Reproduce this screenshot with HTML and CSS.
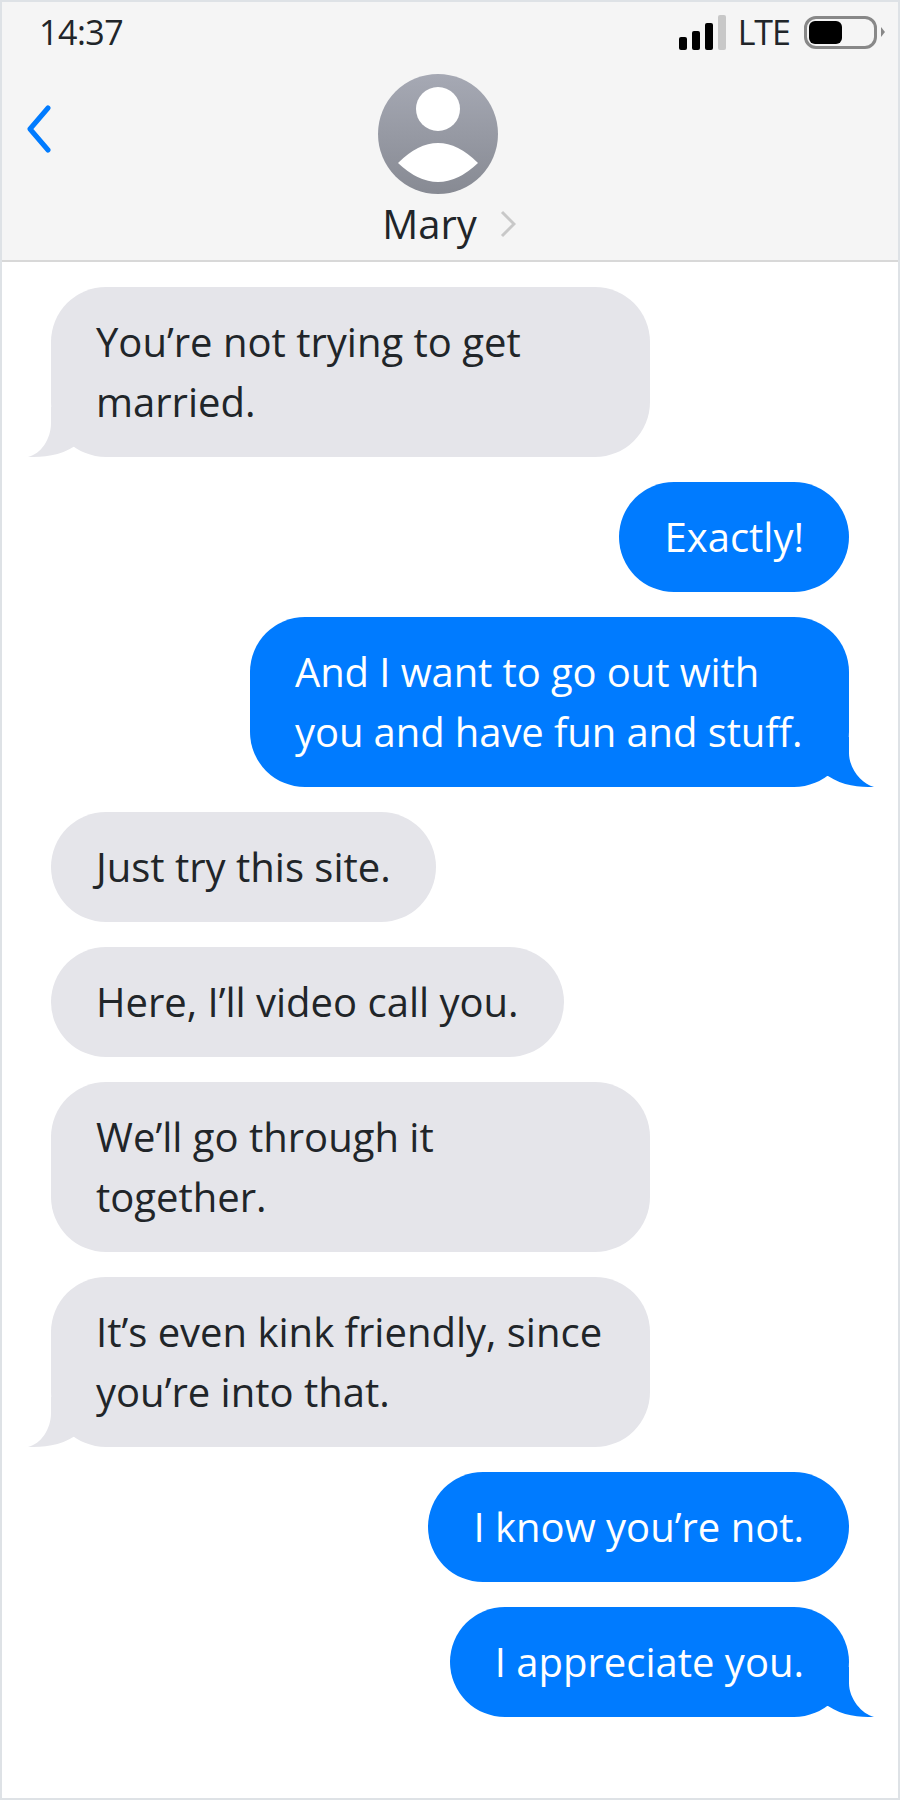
FILE: index.html
```html
<!DOCTYPE html>
<html lang="en">
<head>
  <meta charset="UTF-8">
  <title>Messages</title>
  <link rel="stylesheet" href="styles.css">
</head>
<body>
  <div class="phone">
    <header class="header">
      <div class="status">
        <span class="time">14:37</span>
        <div class="status-right">
          <div class="signal">
            <span class="bar bar1"></span>
            <span class="bar bar2"></span>
            <span class="bar bar3"></span>
            <span class="bar bar4"></span>
          </div>
          <span class="lte">LTE</span>
          <div class="battery"><span class="battery-level"></span></div>
          <span class="battery-tip"></span>
        </div>
      </div>
      <div class="contact">
        <svg class="back" width="28" height="50" viewBox="0 0 28 50">
          <path d="M23 3 L5 24 L23 45" fill="none" stroke="#007bff" stroke-width="5" stroke-linecap="round" stroke-linejoin="round"/>
        </svg>
        <svg class="avatar" width="120" height="120" viewBox="0 0 120 120">
          <defs>
            <linearGradient id="avatarFill" x1="0" y1="0" x2="0" y2="1">
              <stop offset="0" stop-color="#a6a9b4"/>
              <stop offset="1" stop-color="#878a93"/>
            </linearGradient>
          </defs>
          <circle cx="60" cy="60" r="60" fill="url(#avatarFill)"/>
          <circle cx="60" cy="35" r="22" fill="#fff"/>
          <path d="M20 89 Q60 49 100 89 Q60 127 20 89 Z" fill="#fff"/>
        </svg>
        <div class="name-row">
          <span class="name">Mary</span>
          <svg class="chevron" width="16" height="28" viewBox="0 0 16 28">
            <path d="M2 2 L14 14 L2 26" fill="none" stroke="#c8c8c8" stroke-width="3"/>
          </svg>
        </div>
      </div>
    </header>

    <main class="thread">
      <div class="msg in tail">You’re not trying to get married.</div>
      <div class="msg out">Exactly!</div>
      <div class="msg out tail tight">And I want to go out with you and have fun and stuff.</div>
      <div class="msg in">Just try this site.</div>
      <div class="msg in">Here, I’ll video call you.</div>
      <div class="msg in">We’ll go through it together.</div>
      <div class="msg in tail">It’s even kink friendly, since you’re into that.</div>
      <div class="msg out">I know you’re not.</div>
      <div class="msg out tail">I appreciate you.</div>
    </main>
  </div>
</body>
</html>
```

FILE: styles.css
```css
* {
  box-sizing: border-box;
}
body {
  margin: 0;
  font-family: "Open Sans", "Noto Sans", sans-serif;
  color: #212529;
  background-color: #fff;
}
.phone {
  width: 900px;
  height: 1800px;
  border: 2px solid #dee2e6;
  overflow: hidden;
}
.header {
  height: 260px;
  background-color: #f5f5f5;
  border-bottom: 2px solid #d8d8d8;
}
.status {
  height: 60px;
  padding: 0 13px 0 37px;
  display: flex;
  justify-content: space-between;
  align-items: center;
}
.time {
  font-size: 34px;
  letter-spacing: -0.5px;
}
.status-right {
  display: flex;
  align-items: center;
}
.signal {
  display: flex;
  align-items: flex-end;
  gap: 5px;
  height: 35px;
  margin-right: 12px;
}
.bar {
  width: 8px;
  background-color: #000;
  border-radius: 2px;
}
.bar1 { height: 13px; }
.bar2 { height: 19px; }
.bar3 { height: 27px; }
.bar4 { height: 35px; background-color: #c8c8c8; }
.lte {
  font-size: 34px;
  letter-spacing: -1px;
  margin-right: 14px;
}
.battery {
  width: 73px;
  height: 33px;
  border: 3px solid #888;
  border-radius: 12px;
  padding: 2px;
}
.battery-level {
  display: block;
  width: 33px;
  height: 100%;
  background-color: #000;
  border-radius: 6px;
}
.battery-tip {
  width: 0;
  height: 0;
  margin-left: 4px;
  border-left: 4px solid #888;
  border-top: 5px solid transparent;
  border-bottom: 5px solid transparent;
}
.contact {
  position: relative;
  height: 198px;
  display: flex;
  flex-direction: column;
  align-items: center;
  padding-top: 12px;
}
.back {
  position: absolute;
  left: 23px;
  top: 43px;
}
.avatar {
  margin-left: -24px;
}
.name-row {
  display: flex;
  align-items: center;
  gap: 23px;
  margin-top: 3px;
  margin-right: 2px;
}
.name {
  font-size: 40px;
  line-height: 54px;
}
.thread {
  display: flex;
  flex-direction: column;
  gap: 25px;
  padding: 25px 49px 0;
}
.msg {
  position: relative;
  max-width: 599px;
  padding: 25px 45px;
  border-radius: 55px;
  font-size: 40px;
  line-height: 60px;
}
.tight {
  letter-spacing: -0.1px;
}
.in {
  align-self: flex-start;
  background-color: #e5e5ea;
}
.out {
  align-self: flex-end;
  background-color: #007bff;
  color: #fff;
}
/* tail sits on the bottom corner of the bubble */
.tail::after {
  content: "";
  position: absolute;
  bottom: 0;
  width: 60px;
  height: 50px;
  background-color: inherit;
}
.in.tail::after {
  left: -23px;
  clip-path: path("M23 0 V16 C23 32 13 47 0 50 C15 50 32 49 47 39 L60 39 V0 Z");
}
.out.tail::after {
  right: -25px;
  clip-path: path("M35 0 V16 C35 32 48 47 60 50 C45 50 29 49 14 39 L0 39 V0 Z");
}
```
